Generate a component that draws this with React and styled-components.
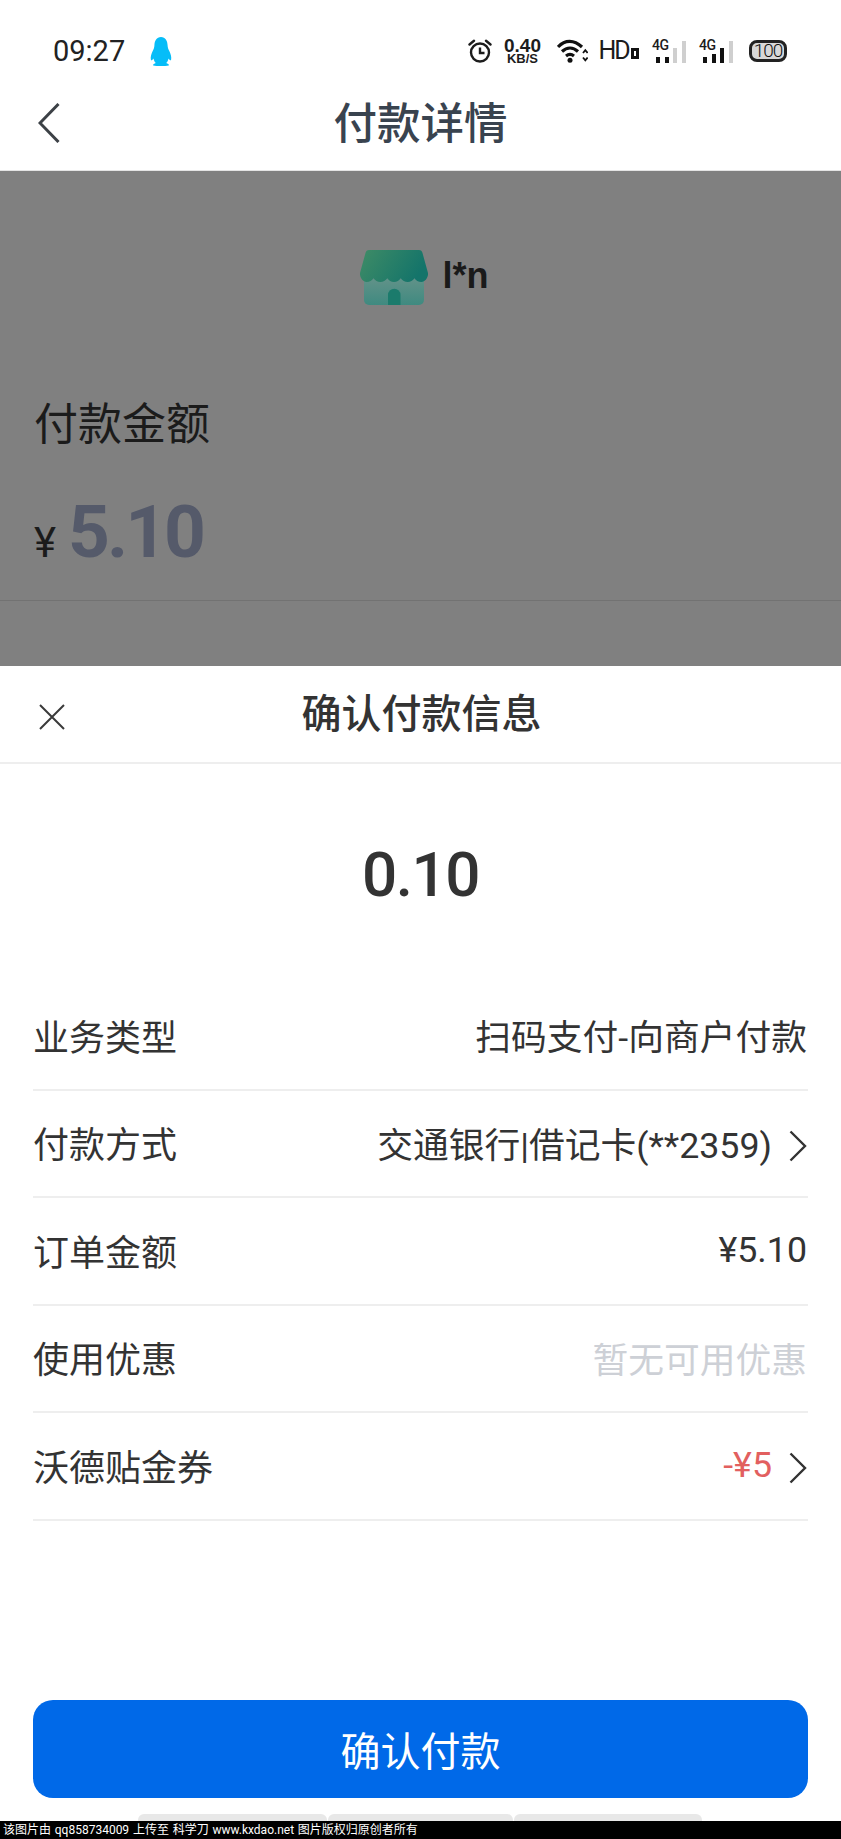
import styled, { createGlobalStyle } from "styled-components";

const GlobalStyle = createGlobalStyle`
    html, body {
        margin: 0;
        padding: 0;
        background: #fff;
    }
    * {
        box-sizing: border-box;
    }
`;

const rows = [
    { label: "业务类型", value: "扫码支付-向商户付款" },
    { label: "付款方式", value: "交通银行|借记卡(**2359)", arrow: true },
    { label: "订单金额", value: "¥5.10" },
    { label: "使用优惠", value: "暂无可用优惠", tone: "muted" },
    { label: "沃德贴金券", value: "-¥5", tone: "red", arrow: true },
];

function Penguin() {
    return (
        <svg width="24" height="29" viewBox="0 0 24 29">
            <path
                fill="#06bdf8"
                d="M12 0c4.4 0 6.4 3.6 6.6 8.4.1 2.4.8 3.6 1.7 5.6 1.4 3 2.4 6.2 1.8 8.8-.4 1.3-1.7-.2-2.6-1.4-.5 2.3-1.2 3.5-2.3 4.6 1.4.5 2.8 1.2 2.8 2.2 0 .5-2.4.8-6.5.8h-3c-4.1 0-6.5-.3-6.5-.8 0-1 1.4-1.7 2.8-2.2-1.1-1.1-1.8-2.3-2.3-4.6-.9 1.2-2.2 2.7-2.6 1.4-.6-2.6.4-5.8 1.8-8.8.9-2 1.6-3.2 1.7-5.6C5.6 3.6 7.6 0 12 0z"
            />
        </svg>
    );
}

function Alarm() {
    return (
        <svg width="24" height="24" viewBox="0 0 24 24" fill="none" stroke="#1c1c1c" strokeWidth="2.4">
            <circle cx="12" cy="13.5" r="9" />
            <path d="M12 8.5v5.5h4.5" />
            <path d="M1.5 5.5 6 1.8M22.5 5.5 18 1.8" strokeLinecap="round" />
        </svg>
    );
}

function Wifi() {
    return (
        <svg width="31" height="24" viewBox="0 0 31 24" fill="none" stroke="#111" strokeWidth="3.2">
            <path d="M1 8C8 .5 17 .5 25 8" />
            <path d="M5 12.5c5-4.5 11-4.5 16 0" />
            <path d="M9 17c2.8-2.2 5.2-2.2 8 0" />
            <circle cx="13" cy="21.2" r="2.5" fill="#111" stroke="none" />
            <path d="M26 14l2.3-2.8 2.3 2.8M26 18.5l2.3 2.8 2.3-2.8" strokeWidth="1.8" />
        </svg>
    );
}

function Store() {
    return (
        <svg width="68" height="56" viewBox="0 0 68 56">
            <defs>
                <linearGradient id="awning" x1="0" y1="0" x2="1" y2="0.3">
                    <stop offset="0" stopColor="#3f8c66" />
                    <stop offset="1" stopColor="#14746a" />
                </linearGradient>
                <linearGradient id="shop" x1="0" y1="0" x2="0" y2="1">
                    <stop offset="0" stopColor="#6f958c" />
                    <stop offset="1" stopColor="#3f8a80" />
                </linearGradient>
            </defs>
            <rect x="4" y="18" width="60" height="37" rx="5" fill="url(#shop)" />
            <path d="M28 55V45a6.2 6.2 0 0 1 12.5 0v10z" fill="#1b7b6c" />
            <path
                fill="url(#awning)"
                d="M9 0h50c2 0 3 1 3.5 3L68 23c.5 4-2.5 9-6.5 9-3.2 0-5.6-1.4-7-3.8-1.6 2.4-4 3.8-6.8 3.8s-5.5-1.4-7-3.8c-1.5 2.4-3.8 3.8-6.7 3.8s-5.2-1.4-6.7-3.8c-1.5 2.4-4.2 3.8-7 3.8s-5.2-1.4-6.8-3.8C12 30.600 9.700 32 6.500 32 2.500 32-.5 27 0 23L5.500 3C6 1 7 0 9 0z"
            />
        </svg>
    );
}

function BackChevron() {
    return (
        <svg width="22" height="40" viewBox="0 0 22 40" fill="none" stroke="#3c4146" strokeWidth="3">
            <path d="M20.5 1 2 20l18.5 19" />
        </svg>
    );
}

function CloseIcon() {
    return (
        <svg width="26" height="26" viewBox="0 0 26 26" fill="none" stroke="#3a3a3a" strokeWidth="2">
            <path d="M1 1l24 24M25 1 1 25" />
        </svg>
    );
}

function RowArrow() {
    return (
        <svg width="18" height="32" viewBox="0 0 18 32" fill="none" stroke="#333" strokeWidth="2.4">
            <path d="M1.5 1.5 16 16 1.5 30.5" />
        </svg>
    );
}

export default function App() {
    return (
        <Page>
            <GlobalStyle />

            <StatusBar>
                <Clock>09:27</Clock>
                <Penguin />
                <StatusIcons>
                    <Alarm />
                    <Speed>
                        <SpeedValue>0.40</SpeedValue>
                        <SpeedUnit>KB/S</SpeedUnit>
                    </Speed>
                    <WifiSlot>
                        <Wifi />
                    </WifiSlot>
                    <HdMark>
                        HD<HdDot />
                    </HdMark>
                    <Signal>
                        <NetLabel>4G</NetLabel>
                        <Bar $h={6} />
                        <Bar $h={6} />
                        <Bar $h={15} $off />
                        <Bar $h={22} $off />
                    </Signal>
                    <Signal>
                        <NetLabel>4G</NetLabel>
                        <Bar $h={6} />
                        <Bar $h={9} />
                        <Bar $h={15} />
                        <Bar $h={22} $off />
                    </Signal>
                    <Battery>100</Battery>
                </StatusIcons>
            </StatusBar>

            <NavBar>
                <BackChevron />
                <NavTitle>付款详情</NavTitle>
            </NavBar>

            {/* page behind the sheet, dimmed */}
            <Backdrop>
                <Merchant>
                    <Store />
                    <MerchantName>l*n</MerchantName>
                </Merchant>
                <AmountLabel>付款金额</AmountLabel>
                <AmountLine>
                    <Currency>¥</Currency>
                    <BigAmount>5.10</BigAmount>
                </AmountLine>
            </Backdrop>

            <Sheet>
                <SheetHeader>
                    <CloseIcon />
                    <SheetTitle>确认付款信息</SheetTitle>
                </SheetHeader>
                <PayAmount>0.10</PayAmount>

                {rows.map((row) => (
                    <Row key={row.label}>
                        <RowLabel>{row.label}</RowLabel>
                        <RowValue $tone={row.tone}>
                            {row.value}
                            {row.arrow && <RowArrow />}
                        </RowValue>
                    </Row>
                ))}

                <ConfirmButton>确认付款</ConfirmButton>
                <KeyStrip>
                    <KeyPiece $w={189} />
                    <KeyPiece $w={185} />
                    <KeyPiece $w={188} />
                </KeyStrip>
            </Sheet>

            <Watermark>该图片由 qq858734009 上传至 科学刀 www.kxdao.net 图片版权归原创者所有</Watermark>
        </Page>
    );
}

const Page = styled.div`
    display: flex;
    flex-direction: column;
    width: 841px;
    height: 1839px;
    overflow: hidden;
    background: #fff;
    font-family: Roboto, "Noto Sans CJK SC", sans-serif;
`;

const StatusBar = styled.div`
    display: flex;
    align-items: center;
    height: 85px;
    padding: 17px 54px 0 53px;
    flex-shrink: 0;
`;

const Clock = styled.span`
    font-size: 29px;
    font-weight: 400;
    color: #222;
    margin-right: 24px;
`;

const StatusIcons = styled.div`
    display: flex;
    align-items: center;
    gap: 13px;
    margin-left: auto;
`;

const Speed = styled.div`
    display: flex;
    flex-direction: column;
    align-items: center;
    width: 37px;
    margin-left: -1px;
    font-family: "Liberation Sans", sans-serif;
    font-weight: 700;
    color: #1c1c1c;
`;

const SpeedValue = styled.span`
    font-size: 19px;
    line-height: 15px;
`;

const SpeedUnit = styled.span`
    font-size: 13px;
    line-height: 12px;
`;

const WifiSlot = styled.span`
    display: flex;
    margin-left: 3px;
`;

const HdMark = styled.span`
    display: flex;
    align-items: flex-end;
    gap: 1px;
    width: 40.5px;
    margin-left: -2.5px;
    font-size: 25px;
    line-height: 24px;
    letter-spacing: -2px;
    color: #1c1c1c;
`;

const HdDot = styled.i`
    width: 9px;
    height: 11px;
    margin: 0 0 4px 1px;
    border: 3px solid #111;
`;

const Signal = styled.div`
    position: relative;
    display: flex;
    align-items: flex-end;
    gap: 4.5px;
    width: 34px;
    height: 24px;
    padding-left: 4px;
`;

const NetLabel = styled.span`
    position: absolute;
    top: -1px;
    left: 0;
    font-size: 14px;
    line-height: 14px;
    font-weight: 500;
    letter-spacing: -0.5px;
    color: #1c1c1c;
`;

const Bar = styled.i`
    width: 4px;
    height: ${(p) => p.$h}px;
    background: ${(p) => (p.$off ? "#cfcfcf" : "#111")};
`;

const Battery = styled.span`
    width: 38px;
    height: 22px;
    margin-left: 3px;
    border: 3px solid #222;
    border-radius: 8px;
    background: #d8d8d8;
    font-size: 19px;
    font-weight: 300;
    line-height: 16px;
    text-align: center;
    color: #111;
    letter-spacing: -1px;
`;

const NavBar = styled.div`
    position: relative;
    display: flex;
    align-items: center;
    justify-content: center;
    height: 86px;
    border-bottom: 1px solid #e4e4e4;
    flex-shrink: 0;

    svg {
        position: absolute;
        left: 38px;
        top: 18px;
    }
`;

const NavTitle = styled.h1`
    margin: 0 0 14px;
    font-size: 43.5px;
    font-weight: 500;
    color: #39434f;
`;

const Backdrop = styled.div`
    position: relative;
    height: 495px;
    flex-shrink: 0;
    background: #808080;
    padding-top: 79px;

    &::after {
        content: "";
        position: absolute;
        left: 0;
        right: 0;
        top: 429px;
        border-top: 1px solid #727272;
    }
`;

const Merchant = styled.div`
    display: flex;
    align-items: center;
    justify-content: center;
    gap: 14px;
    padding-left: 8px;
`;

const MerchantName = styled.span`
    margin-bottom: 4px;
    font-family: "Liberation Sans", sans-serif;
    font-size: 36px;
    font-weight: 700;
    color: #1a1a1a;
`;

const AmountLabel = styled.div`
    margin: 86px 0 0 34px;
    font-size: 44px;
    font-weight: 400;
    line-height: 66px;
    color: #1b1b1b;
`;

const AmountLine = styled.div`
    display: flex;
    align-items: baseline;
    gap: 12px;
    margin: 39px 0 0 34px;
`;

const Currency = styled.span`
    font-size: 42px;
    line-height: 70px;
    color: #1b1b1b;
`;

const BigAmount = styled.span`
    font-size: 73px;
    font-weight: 700;
    line-height: 70px;
    letter-spacing: -3px;
    color: #555a6a;
`;

const Sheet = styled.div`
    display: flex;
    flex-direction: column;
    flex: 1;
    background: #fff;
    min-height: 0;
`;

const SheetHeader = styled.div`
    position: relative;
    display: flex;
    align-items: center;
    justify-content: center;
    height: 98px;
    border-bottom: 2px solid #eeeeee;
    flex-shrink: 0;

    svg {
        position: absolute;
        left: 39px;
        top: 38px;
    }
`;

const SheetTitle = styled.h2`
    margin: 0 0 6px;
    padding-left: 2px;
    font-size: 40px;
    font-weight: 500;
    color: #333;
`;

const PayAmount = styled.div`
    display: flex;
    align-items: center;
    justify-content: center;
    height: 219px;
    padding-top: 2px;
    font-size: 62px;
    font-weight: 500;
    letter-spacing: -1.5px;
    color: #333;
`;

const Row = styled.div`
    display: flex;
    align-items: center;
    justify-content: space-between;
    height: 107.5px;
    margin: 0 33px;
    padding-bottom: 2px;
    border-bottom: 2px solid #eeeeee;
    flex-shrink: 0;
`;

const RowLabel = styled.span`
    font-size: 36px;
    font-weight: 400;
    color: #333;
`;

const toneColor = { muted: "#cdd0d6", red: "#e2605f" };

const RowValue = styled.span`
    display: flex;
    align-items: center;
    gap: 17px;
    margin-right: 1px;
    font-size: 35.75px;
    font-weight: 400;
    color: ${(p) => toneColor[p.$tone] || "#333"};

    svg {
        margin-top: 7px;
    }
`;

const ConfirmButton = styled.button`
    display: block;
    width: 775px;
    height: 98px;
    margin: auto 0 0 33px;
    border: 0;
    border-radius: 20px;
    background: #0069e8;
    color: #fff;
    font-family: inherit;
    font-size: 40px;
    flex-shrink: 0;
`;

const KeyStrip = styled.div`
    display: flex;
    gap: 1px;
    margin: 16px 0 0 138px;
    height: 7px;
    flex-shrink: 0;
`;

const KeyPiece = styled.i`
    display: block;
    width: ${(p) => p.$w}px;
    background: #e8e8e8;
    border-radius: 6px 6px 0 0;
`;

const Watermark = styled.div`
    height: 18px;
    flex-shrink: 0;
    padding-left: 3px;
    background: #000;
    color: #fff;
    font-size: 12px;
    line-height: 18px;
    word-spacing: 0.8px;
    white-space: nowrap;
`;
